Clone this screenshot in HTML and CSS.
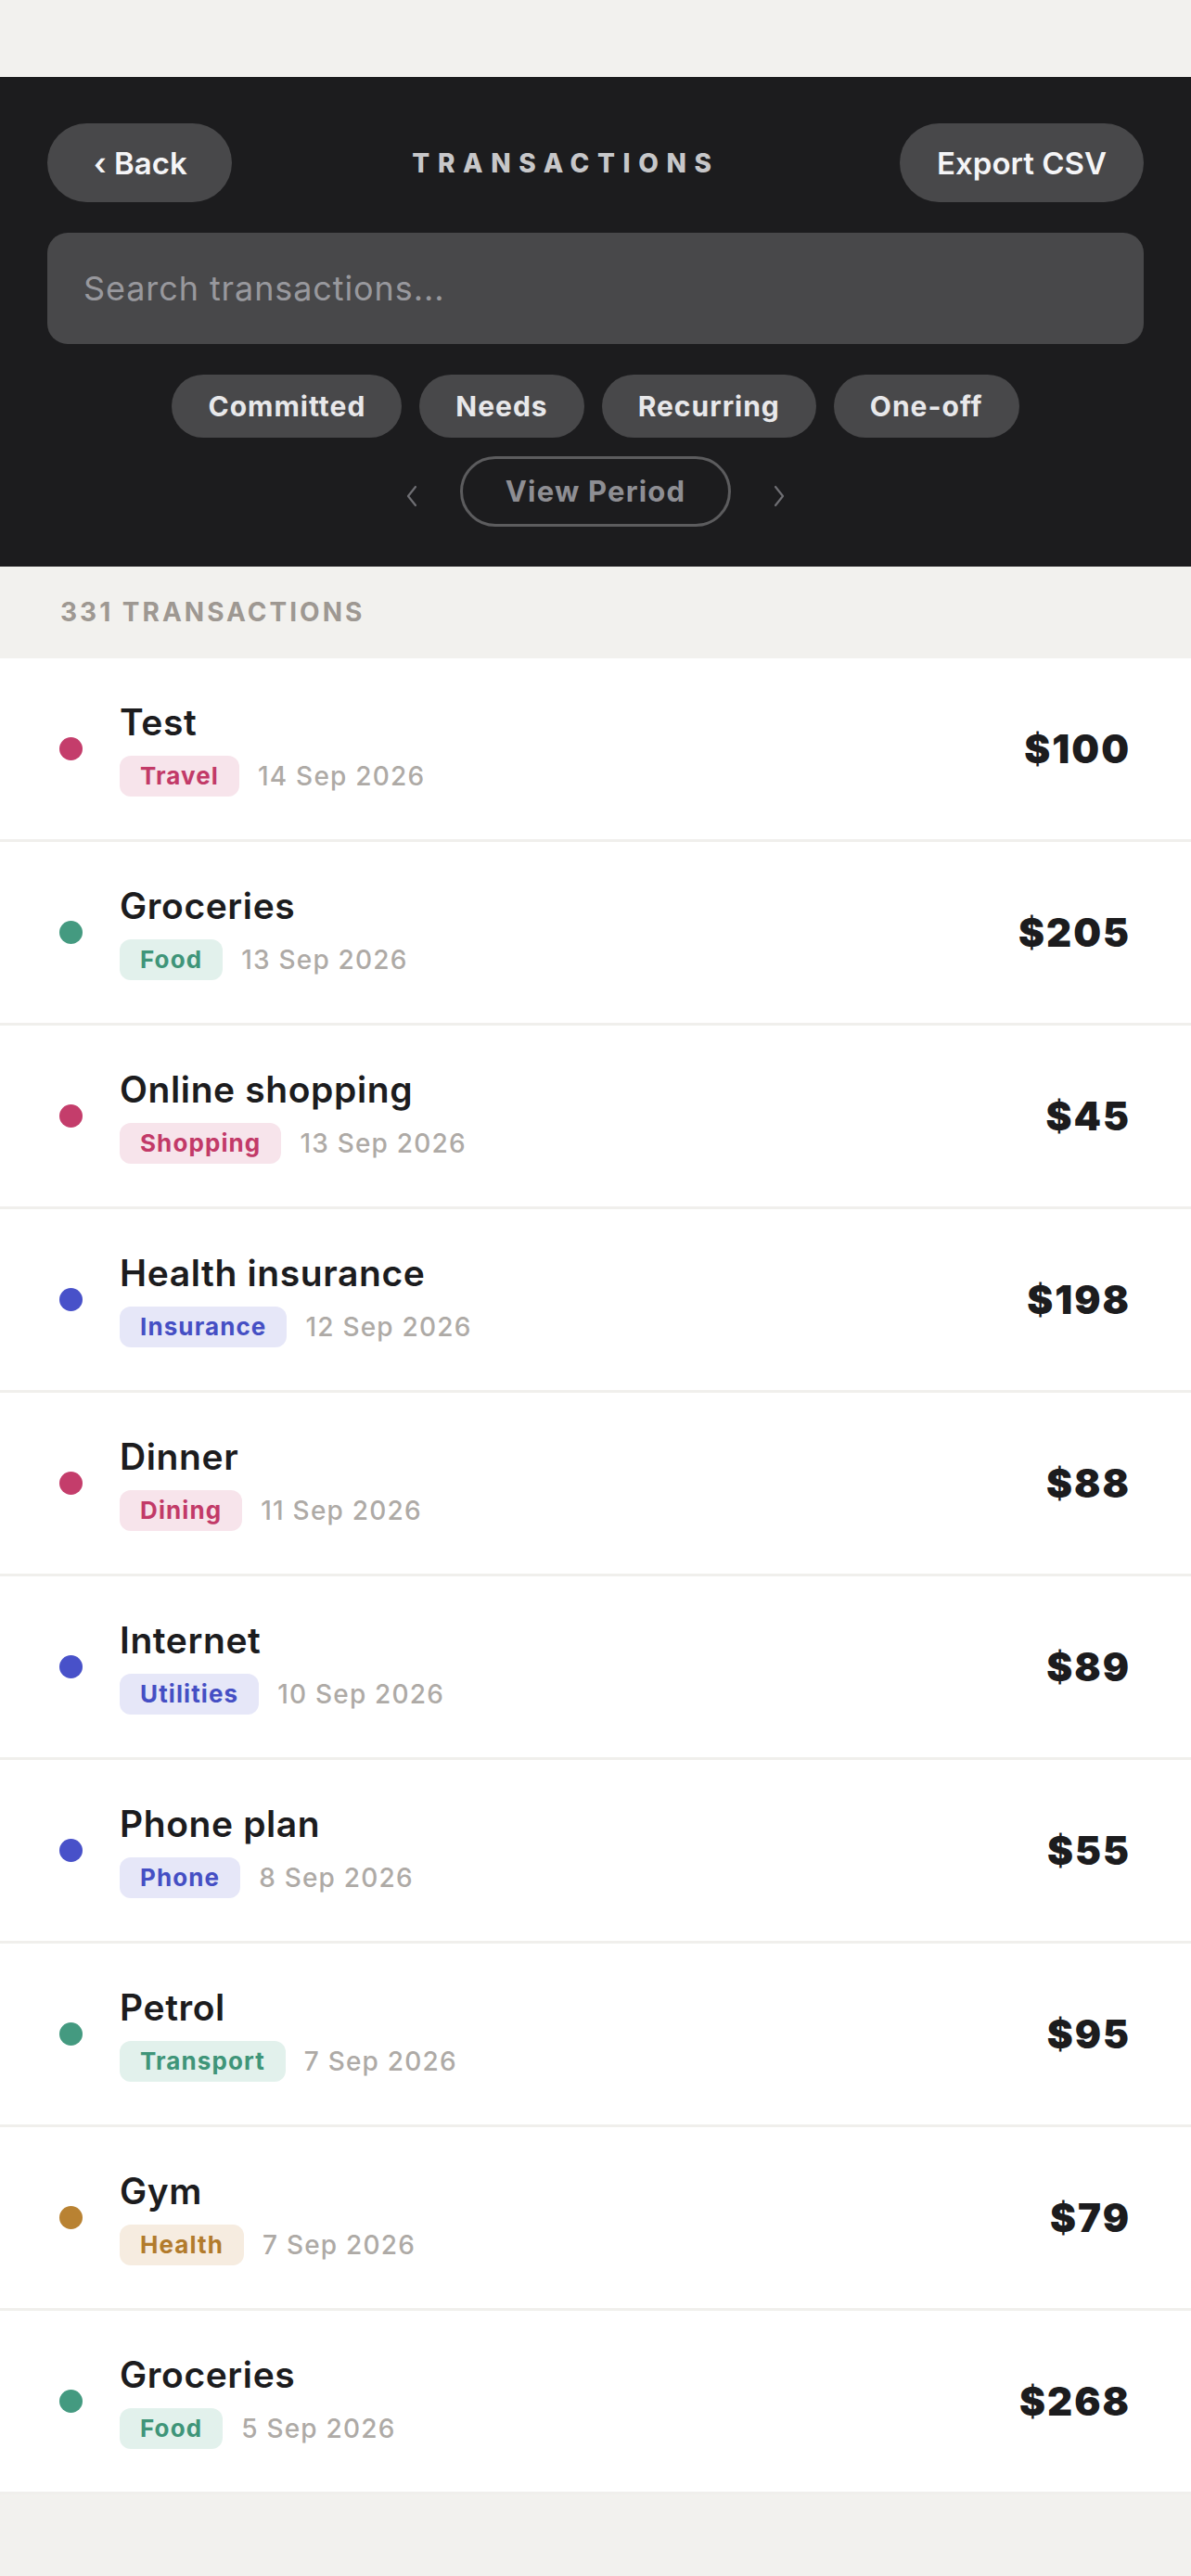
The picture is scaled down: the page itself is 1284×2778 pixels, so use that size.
FILE: index.html
```html
<!DOCTYPE html>
<html lang="en">
<head>
  <meta charset="UTF-8">
  <title>Transactions</title>
  <link rel="stylesheet" href="styles.css">
</head>
<body>
<div class="topgap"></div>
<div class="header">
  <div class="bar">
    <a class="btn btn-back" href="#">‹ Back</a>
    <div class="title">TRANSACTIONS</div>
    <a class="btn" href="#">Export CSV</a>
  </div>
  <div class="search">Search transactions...</div>
  <div class="chips">
    <span class="chip">Committed</span>
    <span class="chip">Needs</span>
    <span class="chip">Recurring</span>
    <span class="chip">One-off</span>
  </div>
  <div class="period">
    <svg class="arrow" width="16" height="24" viewBox="0 0 16 24"><path d="M12 2 L4 12 L12 22" fill="none" stroke="#6e6e73" stroke-width="2.2" stroke-linecap="round" stroke-linejoin="round"/></svg>
    <span class="period-btn">View Period</span>
    <svg class="arrow" width="16" height="24" viewBox="0 0 16 24"><path d="M4 2 L12 12 L4 22" fill="none" stroke="#6e6e73" stroke-width="2.2" stroke-linecap="round" stroke-linejoin="round"/></svg>
  </div>
</div>
<div class="count">331 TRANSACTIONS</div>
<ul class="list">
  <li class="row">
    <span class="dot pink"></span>
    <div class="info">
      <div class="name">Test</div>
      <div class="meta"><span class="tag pink">Travel</span><span class="date">14 Sep 2026</span></div>
    </div>
    <div class="amount">$100</div>
  </li>
  <li class="row">
    <span class="dot green"></span>
    <div class="info">
      <div class="name">Groceries</div>
      <div class="meta"><span class="tag green">Food</span><span class="date">13 Sep 2026</span></div>
    </div>
    <div class="amount">$205</div>
  </li>
  <li class="row">
    <span class="dot pink"></span>
    <div class="info">
      <div class="name">Online shopping</div>
      <div class="meta"><span class="tag pink">Shopping</span><span class="date">13 Sep 2026</span></div>
    </div>
    <div class="amount">$45</div>
  </li>
  <li class="row">
    <span class="dot blue"></span>
    <div class="info">
      <div class="name">Health insurance</div>
      <div class="meta"><span class="tag blue">Insurance</span><span class="date">12 Sep 2026</span></div>
    </div>
    <div class="amount">$198</div>
  </li>
  <li class="row">
    <span class="dot pink"></span>
    <div class="info">
      <div class="name">Dinner</div>
      <div class="meta"><span class="tag pink">Dining</span><span class="date">11 Sep 2026</span></div>
    </div>
    <div class="amount">$88</div>
  </li>
  <li class="row">
    <span class="dot blue"></span>
    <div class="info">
      <div class="name">Internet</div>
      <div class="meta"><span class="tag blue">Utilities</span><span class="date">10 Sep 2026</span></div>
    </div>
    <div class="amount">$89</div>
  </li>
  <li class="row">
    <span class="dot blue"></span>
    <div class="info">
      <div class="name">Phone plan</div>
      <div class="meta"><span class="tag blue">Phone</span><span class="date">8 Sep 2026</span></div>
    </div>
    <div class="amount">$55</div>
  </li>
  <li class="row">
    <span class="dot green"></span>
    <div class="info">
      <div class="name">Petrol</div>
      <div class="meta"><span class="tag green">Transport</span><span class="date">7 Sep 2026</span></div>
    </div>
    <div class="amount">$95</div>
  </li>
  <li class="row">
    <span class="dot amber"></span>
    <div class="info">
      <div class="name">Gym</div>
      <div class="meta"><span class="tag amber">Health</span><span class="date">7 Sep 2026</span></div>
    </div>
    <div class="amount">$79</div>
  </li>
  <li class="row">
    <span class="dot green"></span>
    <div class="info">
      <div class="name">Groceries</div>
      <div class="meta"><span class="tag green">Food</span><span class="date">5 Sep 2026</span></div>
    </div>
    <div class="amount">$268</div>
  </li>
</ul>
</body>
</html>
```

FILE: styles.css
```css
* {
  margin: 0;
  padding: 0;
  box-sizing: border-box;
}

ul {
  list-style: none
}

a {
  text-decoration: none
}

body {
  background-color: #f2f1ee;
  font-family: Inter, "Noto Sans", sans-serif;
  color: #1c1c1e;
}

.topgap {
  height: 83px;
}

/* dark header */
.header {
  background-color: #1c1c1e;
  padding: 50px 51px 43px;
}

.bar {
  display: flex;
  justify-content: space-between;
  align-items: center;
}

.btn {
  display: inline-flex;
  align-items: center;
  height: 85px;
  padding: 0 40px;
  border-radius: 43px;
  background-color: #48484a;
  color: #f5f5f7;
  font-size: 33px;
  font-weight: 600;
}

.btn-back {
  padding: 0 48px 0 50px;
}

.title {
  color: #c7c7c9;
  font-size: 28px;
  font-weight: 800;
  letter-spacing: 8.6px;
}

.search {
  margin-top: 33px;
  height: 120px;
  border-radius: 22px;
  background-color: #48484a;
  color: #98989d;
  font-size: 36px;
  letter-spacing: 0.9px;
  line-height: 120px;
  padding-left: 39px;
}

.chips {
  display: flex;
  justify-content: center;
  gap: 19px;
  margin-top: 33px;
}

.chip {
  height: 68px;
  line-height: 68px;
  padding: 0 39px;
  border-radius: 34px;
  background-color: #48484a;
  color: #e8e8ea;
  font-size: 30px;
  font-weight: 700;
  letter-spacing: 1px;
}

.period {
  display: flex;
  justify-content: center;
  align-items: center;
  gap: 44px;
  margin-top: 20px;
}

.arrow {
  margin-top: 10px;
}

.period-btn {
  width: 292px;
  height: 76px;
  line-height: 70px;
  text-align: center;
  border: 3px solid #5c5c5e;
  border-radius: 38px;
  color: #8e8e93;
  font-size: 31px;
  font-weight: 700;
  letter-spacing: 1.2px;
}

.count {
  height: 99px;
  line-height: 99px;
  padding-left: 65px;
  color: #9e9892;
  font-size: 28px;
  font-weight: 700;
  letter-spacing: 3px;
}

/* rows */
.row {
  display: flex;
  align-items: center;
  height: 198px;
  padding: 0 65px 0 64px;
  background-color: #fff;
  border-bottom: 3px solid #f0efec;
}

.dot {
  width: 25px;
  height: 25px;
  border-radius: 50%;
  margin-right: 40px;
  flex-shrink: 0;
}

.info {
  flex: 1;
}

.name {
  font-size: 39px;
  font-weight: 600;
  line-height: 46px;
  letter-spacing: 0.6px;
  color: #1c1c1e;
}

.meta {
  display: flex;
  align-items: center;
  gap: 20px;
  margin-top: 13px;
}

.tag {
  height: 44px;
  line-height: 44px;
  padding: 0 22px;
  border-radius: 12px;
  font-size: 26px;
  font-weight: 700;
  letter-spacing: 1.1px;
}

.date {
  color: #aeaaa6;
  font-size: 28px;
  font-weight: 500;
  letter-spacing: 1.2px;
}

.amount {
  font-size: 42px;
  font-weight: 900;
  letter-spacing: 2px;
  color: #1c1c1e;
}

.dot.pink { background-color: #c43d6b; }
.dot.green { background-color: #449a80; }
.dot.blue { background-color: #4851c9; }
.dot.amber { background-color: #b98232; }

.tag.pink { background-color: #f7e4eb; color: #c23a68; }
.tag.green { background-color: #e2f1ec; color: #3f9579; }
.tag.blue { background-color: #e6e7f8; color: #454fc4; }
.tag.amber { background-color: #f6ece0; color: #b27b2c; }
```
